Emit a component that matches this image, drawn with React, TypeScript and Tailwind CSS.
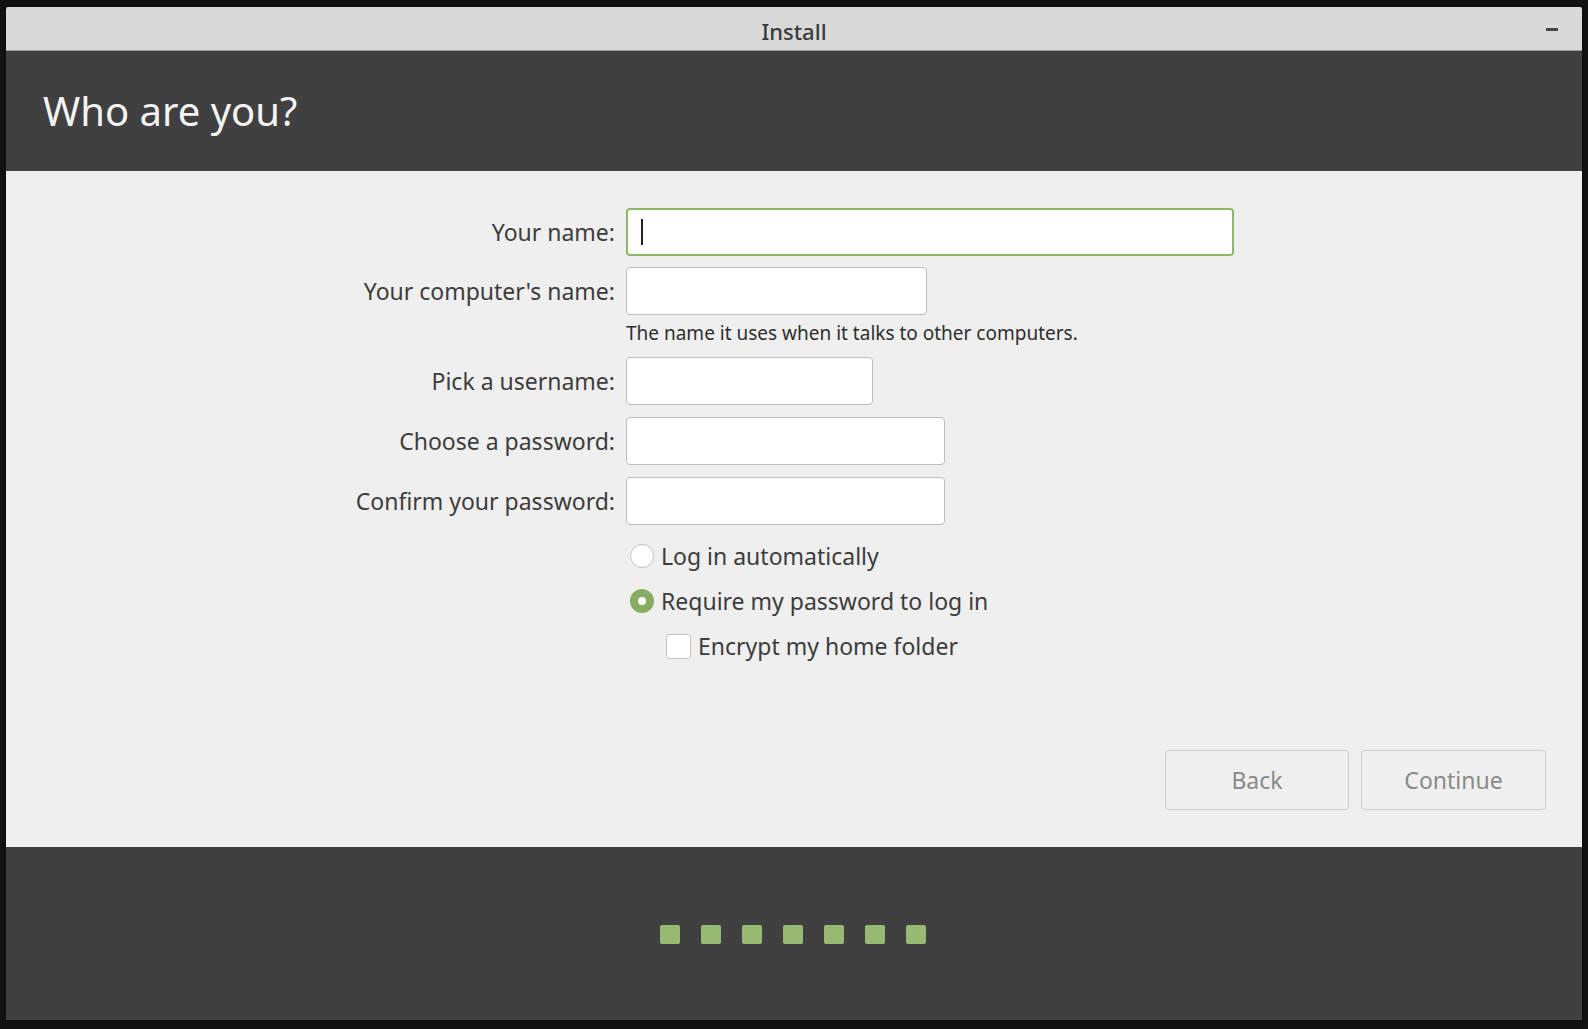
import React from "react";

const font = { fontFamily: '"Noto Sans", "Open Sans", sans-serif' };

function Field({ label, width, focused }: { label: string; width: string; focused?: boolean }) {
	return (
		<div className="flex items-center gap-[11px]">
			<div className="w-[609px] text-right text-[23px] text-[#3c3c3c]">{label}</div>
			<div
				className={`${width} h-[48px] rounded-[4px] bg-white flex items-center ${
					focused ? "border-2 border-[#8fb66b]" : "border border-[#bdbdbd]"
				}`}
			>
				{focused && <div className="ml-[13px] w-[2px] h-[26px] bg-[#222]" />}
			</div>
		</div>
	);
}

export default function App() {
	return (
		<div className="w-[1588px] h-[1029px] bg-[#131313] pt-[7px] pl-[6px]" style={font}>
			<div className="w-[1576px] h-[1013px] flex flex-col shadow-[0_0_6px_rgba(0,0,0,0.6)]">
				{/* title bar */}
				<div className="h-[44px] bg-[#d9d9d9] border-b border-[#9a9a9a] flex items-center justify-center relative rounded-t-[2px]">
					<span className="text-[22px] font-medium text-[#3a3a3a] pt-[5px]">Install</span>
					<div className="absolute right-[24px] top-[21px] w-[12px] h-[3px] bg-[#474747]" />
				</div>

				{/* header */}
				<div className="h-[120px] bg-[#404040] flex items-center pl-[37px]">
					<h1 className="text-[40px] text-[#f3f3f3]">Who are you?</h1>
				</div>

				{/* content */}
				<div className="h-[676px] bg-[#efefef] flex flex-col pt-[37px]">
					<Field label="Your name:" width="w-[608px]" focused />
					<div className="mt-[11px]">
						<Field label="Your computer's name:" width="w-[301px]" />
					</div>
					<div className="ml-[620px] h-[24px] mt-[6px] flex items-center text-[19px] text-[#2e2e2e]">
						The name it uses when it talks to other computers.
					</div>
					<div className="mt-[12px]">
						<Field label="Pick a username:" width="w-[247px]" />
					</div>
					<div className="mt-[12px]">
						<Field label="Choose a password:" width="w-[319px]" />
					</div>
					<div className="mt-[12px]">
						<Field label="Confirm your password:" width="w-[319px]" />
					</div>

					<div className="ml-[624px] mt-[16px] h-[30px] flex items-center gap-[7px]">
						<div className="w-[24px] h-[24px] rounded-full bg-white border border-[#c4c4c4]" />
						<span className="text-[23px] text-[#3c3c3c]">Log in automatically</span>
					</div>
					<div className="ml-[624px] mt-[15px] h-[30px] flex items-center gap-[7px]">
						<div className="w-[24px] h-[24px] rounded-full bg-[#87ad62] flex items-center justify-center">
							<div className="w-[8px] h-[8px] rounded-full bg-white" />
						</div>
						<span className="text-[23px] text-[#3c3c3c]">Require my password to log in</span>
					</div>
					<div className="ml-[660px] mt-[15px] h-[30px] flex items-center gap-[7px]">
						<div className="w-[25px] h-[25px] rounded-[3px] bg-white border border-[#c4c4c4]" />
						<span className="text-[23px] text-[#3c3c3c]">Encrypt my home folder</span>
					</div>

					<div className="mt-auto mb-[37px] mr-[36px] flex justify-end gap-[12px]">
						<button className="w-[184px] h-[60px] rounded-[4px] border border-[#cdcdcd] bg-[#f0f0f0] text-[23px] text-[#8a8a8a]">
							Back
						</button>
						<button className="w-[185px] h-[60px] rounded-[4px] border border-[#cdcdcd] bg-[#f0f0f0] text-[23px] text-[#8a8a8a]">
							Continue
						</button>
					</div>
				</div>

				{/* footer */}
				<div className="flex-1 bg-[#404040] flex justify-center pt-[78px] pr-[2px]">
					<div className="flex gap-[21px] h-[19px]">
						{[0, 1, 2, 3, 4, 5, 6].map((i) => (
							<div key={i} className="w-[20px] h-[19px] rounded-[2px] bg-[#98b972]" />
						))}
					</div>
				</div>
			</div>
		</div>
	);
}
